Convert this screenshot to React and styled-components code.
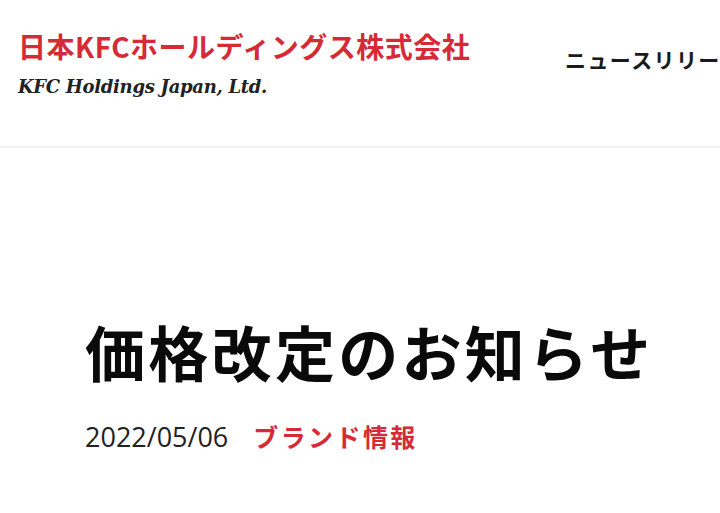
import React from 'react';
import styled, { createGlobalStyle } from 'styled-components';

const GlobalStyle = createGlobalStyle`
  html, body {
    margin: 0;
    padding: 0;
    background: #fff;
    overflow: hidden;
  }
  body {
    font-family: "Noto Sans CJK JP", "Noto Sans", sans-serif;
    color: #111;
  }
`;

const Header = styled.header`
  height: 146px;
  border-bottom: 2px solid #f0f0f0;
  display: flex;
  align-items: flex-start;
  padding: 0 0 0 18px;
  white-space: nowrap;
  overflow: hidden;
`;

const Brand = styled.div`
  display: flex;
  flex-direction: column;
  padding-top: 26px;
  width: 547px;
  flex-shrink: 0;
`;

const LogoJa = styled.span`
  font-family: "Noto Sans CJK JP", sans-serif;
  font-weight: 700;
  font-size: 28px;
  line-height: 40px;
  letter-spacing: 0.5px;
  color: #d62a36;
`;

const LogoEn = styled.span`
  font-family: "DejaVu Serif", serif;
  font-style: italic;
  font-weight: 700;
  font-size: 18px;
  line-height: 20px;
  margin-top: 11px;
  letter-spacing: -0.3px;
  color: #222;
`;

const Nav = styled.nav`
  display: flex;
  padding-top: 44px;
`;

const NavItem = styled.a`
  font-family: "Noto Sans CJK JP", sans-serif;
  font-weight: 700;
  font-size: 21px;
  letter-spacing: 1.4px;
  color: #1a1a1a;
  text-decoration: none;
`;

const Main = styled.main`
  padding: 163px 0 0 85px;
`;

const Title = styled.h1`
  margin: 0;
  font-family: "Noto Sans CJK JP", sans-serif;
  font-weight: 700;
  font-size: 60px;
  line-height: 80px;
  letter-spacing: 3.3px;
  color: #0a0a0a;
`;

const Meta = styled.div`
  display: flex;
  align-items: baseline;
  gap: 25px;
  margin-top: 27px;
`;

const Date = styled.span`
  font-family: "Open Sans", "Noto Sans", sans-serif;
  font-size: 27px;
  color: #222;
`;

const Category = styled.a`
  font-family: "Noto Sans CJK JP", sans-serif;
  font-weight: 700;
  font-size: 25px;
  letter-spacing: 2.4px;
  color: #d62a36;
  text-decoration: none;
`;

export default function App() {
  return (
    <>
      <GlobalStyle />
      <Header>
        <Brand>
          <LogoJa>日本KFCホールディングス株式会社</LogoJa>
          <LogoEn>KFC Holdings Japan, Ltd.</LogoEn>
        </Brand>
        <Nav>
          <NavItem href="#">ニュースリリース</NavItem>
        </Nav>
      </Header>
      <Main>
        <Title>価格改定のお知らせ</Title>
        <Meta>
          <Date>2022/05/06</Date>
          <Category href="#">ブランド情報</Category>
        </Meta>
      </Main>
    </>
  );
}
